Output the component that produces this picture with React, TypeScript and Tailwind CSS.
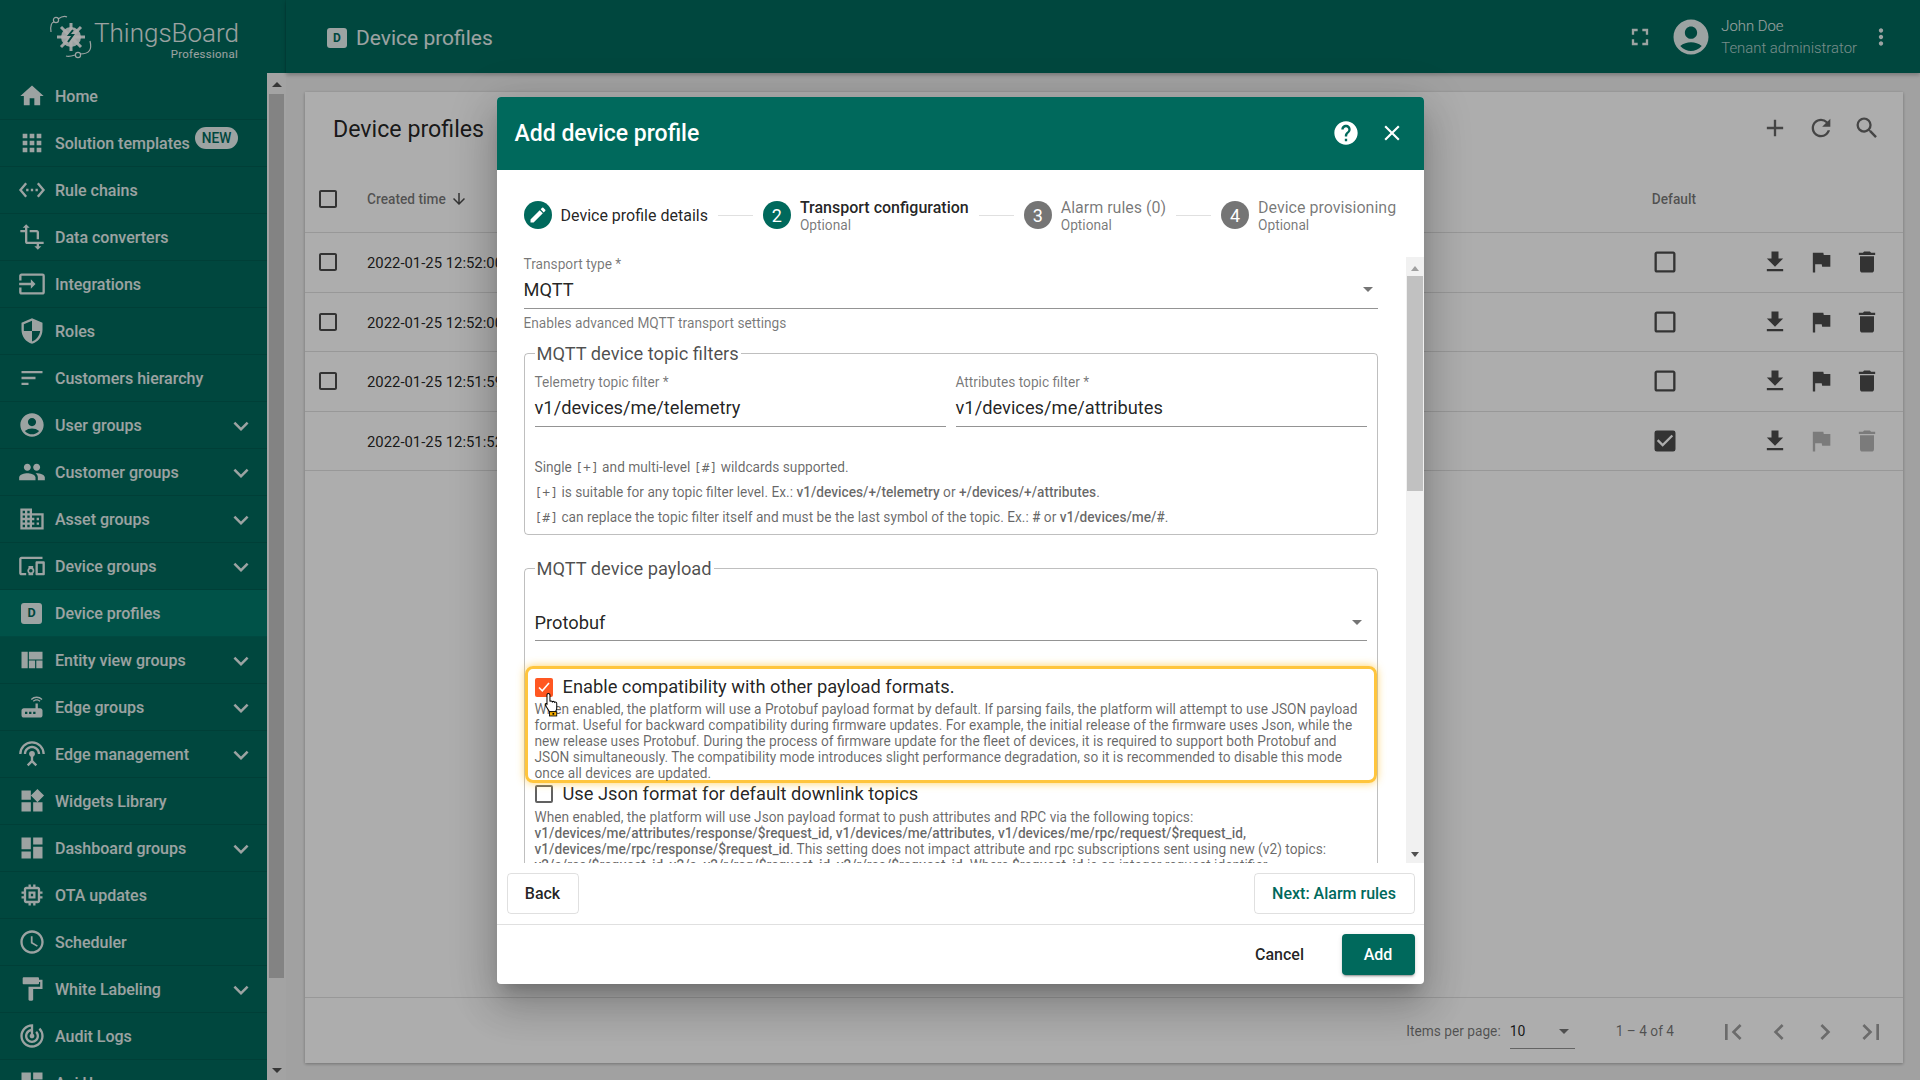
import type { ReactNode } from "react";
import {
  MdAccountCircle, MdAdd, MdApps, MdArrowDownward, MdCheckBox, MdCheckBoxOutlineBlank, MdChevronLeft, MdChevronRight,
  MdClose, MdDashboard, MdDelete, MdDevicesOther, MdDomain, MdEdit, MdExpandMore, MdFileDownload, MdFirstPage, MdFlag,
  MdFormatPaint, MdFullscreen, MdHelp, MdHome, MdInput, MdLastPage, MdMemory, MdMoreVert, MdPeople, MdRefresh, MdRouter,
  MdSchedule, MdSearch, MdSecurity, MdSettingsEthernet, MdSettingsInputAntenna, MdSort, MdTrackChanges, MdTransform,
  MdViewQuilt, MdWidgets,
} from "react-icons/md";

const DeviceIcon = ({ size }: { size: number }) => (
  <div
    className="flex items-center justify-center rounded-[3px] bg-white/90 text-[#00695c] font-bold leading-none"
    style={{ width: size, height: size, fontSize: size * 0.6 }}
  >
    D
  </div>
);

const menu: { label: string; icon: ReactNode; more?: boolean; active?: boolean; badge?: boolean }[] = [
  { label: "Home", icon: <MdHome size={28} /> },
  { label: "Solution templates", icon: <MdApps size={28} />, badge: true },
  { label: "Rule chains", icon: <MdSettingsEthernet size={28} /> },
  { label: "Data converters", icon: <MdTransform size={28} /> },
  { label: "Integrations", icon: <MdInput size={28} /> },
  { label: "Roles", icon: <MdSecurity size={28} /> },
  { label: "Customers hierarchy", icon: <MdSort size={28} /> },
  { label: "User groups", icon: <MdAccountCircle size={28} />, more: true },
  { label: "Customer groups", icon: <MdPeople size={28} />, more: true },
  { label: "Asset groups", icon: <MdDomain size={28} />, more: true },
  { label: "Device groups", icon: <MdDevicesOther size={28} />, more: true },
  { label: "Device profiles", icon: <span className="pl-[3px]"><DeviceIcon size={21} /></span>, active: true },
  { label: "Entity view groups", icon: <MdViewQuilt size={28} />, more: true },
  { label: "Edge groups", icon: <MdRouter size={28} />, more: true },
  { label: "Edge management", icon: <MdSettingsInputAntenna size={28} />, more: true },
  { label: "Widgets Library", icon: <MdWidgets size={28} /> },
  { label: "Dashboard groups", icon: <MdDashboard size={28} />, more: true },
  { label: "OTA updates", icon: <MdMemory size={28} /> },
  { label: "Scheduler", icon: <MdSchedule size={28} /> },
  { label: "White Labeling", icon: <MdFormatPaint size={28} />, more: true },
  { label: "Audit Logs", icon: <MdTrackChanges size={28} /> },
  { label: "Api Usage", icon: <MdDashboard size={28} /> },
];

const rows = [
  { time: "2022-01-25 12:52:00", isDefault: false },
  { time: "2022-01-25 12:52:00", isDefault: false },
  { time: "2022-01-25 12:51:59", isDefault: false },
  { time: "2022-01-25 12:51:52", isDefault: true },
];

const Logo = () => (
  <svg width="46" height="46" viewBox="0 0 46 46" className="text-white/90">
    {/* gear body */}
    <g fill="currentColor">
      <circle cx="23" cy="23" r="10" />
      <g stroke="currentColor" strokeWidth="3">
        <path d="M23 9v28M9 23h28M13 13l20 20M33 13L13 33" />
      </g>
    </g>
    <path d="M25 16l-4 5h4l-5 7" fill="none" stroke="#00695c" strokeWidth="2" />
    <g fill="none" stroke="currentColor" strokeWidth="1.2">
      <circle cx="8" cy="6" r="2.6" />
      <circle cx="30" cy="41" r="2.6" />
      <path d="M3 18C2 11 4 8 6 8M10 5c3-2 7-3 9-2M42 27c2 8 0 13-10 13M27 41c-3 1-6 2-9 1" />
    </g>
  </svg>
);

const Sidebar = () => (
  <div className="flex h-full w-[286px] shrink-0 flex-col bg-[#00695c]">
    <div className="flex h-[73px] shrink-0 items-center border-r border-black/5 pl-[48px]">
      <Logo />
      <div className="flex flex-col items-end pt-[4px]">
        <span className="text-[26px] leading-[30px] font-light text-white/90">ThingsBoard</span>
        <span className="mr-px text-[11.43px] leading-[12px] font-normal tracking-[0.3px] text-white/90">Professional</span>
      </div>
    </div>
    <div className="flex min-h-0 flex-1">
      <div className="w-[267px] overflow-hidden">
        {menu.map((m) => (
          <div
            key={m.label}
            className={`flex h-[47px] shrink-0 items-center border-b border-black/10 pl-[18px] text-[16px] font-medium text-white/90 ${m.active ? "bg-[#00796b]" : ""}`}
          >
            <span className="flex w-[37px] shrink-0 items-center justify-start">{m.icon}</span>
            <span className="whitespace-nowrap pt-[2px]">{m.label}</span>
            {m.badge && (
              <span className="-mt-[10px] ml-[5px] rounded-full bg-white/90 px-[7px] text-[13.71px] leading-[22px] text-[#00695c]">NEW</span>
            )}
            {m.more && <MdExpandMore size={30} className="ml-auto mr-[11px] mt-[2px]" />}
          </div>
        ))}
      </div>
      <Scrollbar />
    </div>
  </div>
);

// page scrollbar next to the menu
const Scrollbar = () => (
  <div className="flex w-[19px] shrink-0 flex-col items-center bg-[#f1f1f1] px-[2px]">
    <div className="mt-[9px] h-0 w-0 border-x-[5px] border-b-[5px] border-x-transparent border-b-[#505050]" />
    <div className="mt-[7px] h-[884px] w-full bg-[#c1c1c1]" />
    <div className="mt-auto mb-[7px] h-0 w-0 border-x-[5px] border-t-[5px] border-x-transparent border-t-[#505050]" />
  </div>
);

const Table = () => (
  <div className="flex h-full flex-col bg-white shadow-[0_1px_3px_rgba(0,0,0,0.3)]">
    <div className="flex h-[71px] shrink-0 items-center pl-[28px] pr-[22px] text-black/87">
      <span className="pt-[3px] text-[23.2px]">Device profiles</span>
      <div className="ml-auto flex items-center gap-[18px] text-black/60">
        <MdAdd size={28} />
        <MdRefresh size={28} />
        <MdSearch size={28} />
      </div>
    </div>
    <div className="flex h-[70px] shrink-0 items-center border-b border-black/12 pt-[2px] text-[13.71px] font-medium text-black/54">
      <div className="flex w-[62px] pl-[11px]"><MdCheckBoxOutlineBlank size={24} className="text-black/70" /></div>
      <span className="pt-[2px]">Created time</span>
      <MdArrowDownward size={18} className="ml-[4px] text-black/70" />
      <span className="ml-auto mr-[207px] pt-[2px]">Default</span>
    </div>
    {rows.map((r, i) => (
      <div key={i} className="flex h-[59.5px] shrink-0 items-center border-b border-black/12 text-[14.86px] text-black/87">
        <div className="flex w-[62px] pl-[11px]">{!r.isDefault && <MdCheckBoxOutlineBlank size={24} className="text-black/70" />}</div>
        <span className="pt-[2px]">{r.time}</span>
        <div className="ml-auto mr-[82px] text-black/70">
          {r.isDefault ? <MdCheckBox size={28} /> : <MdCheckBoxOutlineBlank size={28} />}
        </div>
        <div className="flex items-center gap-[18px] pr-[22px] text-black/70">
          <MdFileDownload size={28} />
          <MdFlag size={28} className={r.isDefault ? "opacity-40" : ""} />
          <MdDelete size={28} className={r.isDefault ? "opacity-40" : ""} />
        </div>
      </div>
    ))}
    <div className="flex-1" />
    <div className="flex h-[66px] shrink-0 items-center border-t border-black/12 pt-[2px] text-[13.71px] text-black/54">
      <span className="ml-auto">Items per page:</span>
      <div className="ml-[9px] flex h-[34px] w-[65px] items-center justify-between border-b border-black/42 pr-[6px] text-[14px] text-black/87">
        <span>10</span>
        <div className="h-0 w-0 border-x-[5px] border-t-[5px] border-x-transparent border-t-black/54" />
      </div>
      <span className="ml-[41px]">1 – 4 of 4</span>
      <div className="ml-[43px] flex items-center gap-[14px] pr-[16px] text-black/38">
        <MdFirstPage size={32} />
        <MdChevronLeft size={32} />
        <MdChevronRight size={32} />
        <MdLastPage size={32} />
      </div>
    </div>
  </div>
);

const Step = ({ n, title, active, done }: { n: string; title: string; active?: boolean; done?: boolean }) => (
  <div className="flex shrink-0 items-center">
    <div
      className={`flex h-[28px] w-[28px] items-center justify-center rounded-full text-[18px] text-white ${active || done ? "bg-[#00695c]" : "bg-black/54"}`}
    >
      {done ? <MdEdit size={20} /> : n}
    </div>
    <div className={`ml-[9px] flex flex-col ${done ? "" : "mt-[2px]"}`}>
      <span className={`text-[16px] leading-[19px] whitespace-nowrap ${done ? "text-black/87" : active ? "font-medium text-black/87" : "text-black/54"}`}>{title}</span>
      {!done && <span className="text-[13.71px] leading-[17px] text-black/54">Optional</span>}
    </div>
  </div>
);

const StepLine = () => <div className="mx-[10px] h-px w-[35px] shrink-0 bg-black/12" />;

const Check = ({ checked }: { checked?: boolean }) =>
  checked ? (
    <div className="flex h-[19px] w-[18px] shrink-0 items-center justify-center rounded-[2px] bg-[#ff5722] text-white">
      <svg width="14" height="14" viewBox="0 0 14 14"><path d="M2 7.500l3.300 3.300L12 3" fill="none" stroke="currentColor" strokeWidth="1.6" /></svg>
    </div>
  ) : (
    <div className="h-[18px] w-[18px] shrink-0 rounded-[2px] border-2 border-[#616161]" />
  );

const Field = ({ label, value, className }: { label: string; value: string; className?: string }) => (
  <div className={className}>
    <div className="text-[13.71px] leading-[12px] text-black/54 whitespace-nowrap">{label}</div>
    <div className="mt-[10px] border-b border-black/42 pb-[8px] text-[18.29px] leading-[20px] text-black/87">{value}</div>
  </div>
);

const Mono = ({ children }: { children: string }) => <span className="font-['DejaVu_Sans_Mono'] text-[13px] leading-none">{children}</span>;

// pointer drawn on top of the first checkbox
const HandCursor = () => (
  <svg width="17" height="25" viewBox="0 0 20 29" className="absolute left-[16px] top-[23px]">
    <path
      d="M5 1.500c1.200 0 2 .8 2 2V11c.5-1 2.500-.8 2.800.4.700-1 2.500-.6 2.800.6.800-.8 2.400-.4 2.400 1.200V19c0 1.500-.7 2.600-1.500 4H6.500L2 16c-.8-1.200-.5-2.400.5-2.600.8-.2 1.500.3 1 .9V3.500c0-1.200.3-2 1.500-2z"
      fill="#fff"
      stroke="#000"
      strokeWidth="1.2"
    />
    <rect x="6.500" y="23" width="8.500" height="5" fill="#ffb300" stroke="#000" strokeWidth="1" />
    <rect x="10" y="24.500" width="2" height="2" fill="#000" />
  </svg>
);

const Dialog = () => (
  <div className="flex h-[887px] w-[927px] flex-col overflow-hidden rounded-[4px] bg-white shadow-[0_11px_15px_-7px_rgba(0,0,0,0.2),0_24px_38px_3px_rgba(0,0,0,0.14),0_9px_46px_8px_rgba(0,0,0,0.12)]">
    <div className="flex h-[73px] shrink-0 items-center bg-[#00695c] pl-[18px] pr-[19px] text-white">
      <span className="pt-[2px] text-[23px] font-medium">Add device profile</span>
      <MdHelp size={28} className="ml-auto" />
      <MdClose size={26} className="ml-[19px]" />
    </div>

    <div className="flex h-[87px] shrink-0 items-center pl-[27px] pt-[4px]">
      <Step n="1" title="Device profile details" done />
      <StepLine />
      <Step n="2" title="Transport configuration" active />
      <StepLine />
      <Step n="3" title="Alarm rules (0)" />
      <StepLine />
      <Step n="4" title="Device provisioning" />
    </div>

    <div className="flex h-[606px] shrink-0">
      <div className="min-w-0 flex-1 overflow-hidden pl-[27px] pr-[28px]">
        <div className="pt-px text-[13.71px] leading-[12px] text-black/54">Transport type *</div>
        <div className="mt-[10px] flex items-center justify-between border-b border-black/42 pb-[8px] text-[18.29px] leading-[20px] text-black/87">
          MQTT
          <div className="mr-[5px] h-0 w-0 border-x-[5px] border-t-[5px] border-x-transparent border-t-black/54" />
        </div>
        <div className="mt-[8px] text-[13.71px] leading-[12px] text-black/54">Enables advanced MQTT transport settings</div>

        <fieldset className="mt-[14px] rounded-[4px] border border-black/25 px-[10px] pb-[4px]">
          <legend className="px-[2px] text-[18.29px] leading-[22px] text-black/70">MQTT device topic filters</legend>
          <div className="mt-[11px] flex gap-[10px]">
            <Field className="flex-1" label="Telemetry topic filter *" value="v1/devices/me/telemetry" />
            <Field className="flex-1" label="Attributes topic filter *" value="v1/devices/me/attributes" />
          </div>
          <div className="mt-[28px] text-[13.71px] leading-[25px] whitespace-nowrap text-black/60">
            <div>Single <Mono>[+]</Mono> and multi-level <Mono>[#]</Mono> wildcards supported.</div>
            <div><Mono>[+]</Mono> is suitable for any topic filter level. Ex.: <b className="font-medium">v1/devices/+/telemetry</b> or <b className="font-medium">+/devices/+/attributes</b>.</div>
            <div><Mono>[#]</Mono> can replace the topic filter itself and must be the last symbol of the topic. Ex.: <b className="font-medium">#</b> or <b className="font-medium">v1/devices/me/#</b>.</div>
          </div>
        </fieldset>

        <fieldset className="mt-[23px] rounded-[4px] border border-black/25 px-[10px]">
          <legend className="px-[2px] text-[18.29px] leading-[22px] text-black/70">MQTT device payload</legend>
          <div className="mt-[33px] flex items-center justify-between border-b border-black/42 pb-[7px] text-[18.29px] leading-[20px] text-black/87">
            Protobuf
            <div className="mr-[5px] h-0 w-0 border-x-[5px] border-t-[5px] border-x-transparent border-t-black/54" />
          </div>

          <div className="relative -mx-[10px] mt-[25px] h-[117px] rounded-[8px] border-[3px] border-[#ffc53d] pl-[7px] pt-[9px] shadow-[0_0_8px_rgba(255,197,61,0.8)]">
            <div className="flex h-[19px] items-center gap-[10px]">
              <Check checked />
              <span className="text-[18.29px] leading-[20px] whitespace-nowrap text-black/87">Enable compatibility with other payload formats.</span>
            </div>
            <div className="mt-[4px] text-[13.71px] leading-[16px] whitespace-nowrap text-black/60">
              When enabled, the platform will use a Protobuf payload format by default. If parsing fails, the platform will attempt to use JSON payload<br />
              format. Useful for backward compatibility during firmware updates. For example, the initial release of the firmware uses Json, while the<br />
              new release uses Protobuf. During the process of firmware update for the fleet of devices, it is required to support both Protobuf and<br />
              JSON simultaneously. The compatibility mode introduces slight performance degradation, so it is recommended to disable this mode<br />
              once all devices are updated.
            </div>
            <HandCursor />
          </div>

          <div className="flex h-[22px] items-center gap-[10px]">
            <Check />
            <span className="text-[18.29px] leading-[20px] whitespace-nowrap text-black/87">Use Json format for default downlink topics</span>
          </div>
          <div className="mt-[4px] text-[13.71px] leading-[16px] whitespace-nowrap text-black/60">
            When enabled, the platform will use Json payload format to push attributes and RPC via the following topics:<br />
            <b className="font-medium">v1/devices/me/attributes/response/$request_id, v1/devices/me/attributes, v1/devices/me/rpc/request/$request_id,</b><br />
            <b className="font-medium">v1/devices/me/rpc/response/$request_id</b>. This setting does not impact attribute and rpc subscriptions sent using new (v2) topics:<br />
            <b className="font-medium">v2/a/res/$request_id, v2/a, v2/r/req/$request_id, v2/r/res/$request_id</b>. Where <b className="font-medium">$request_id</b> is an integer request identifier.
          </div>
        </fieldset>
      </div>
      <div className="flex w-[18px] shrink-0 flex-col items-center bg-[#f1f1f1] px-[1px]">
        <div className="mt-[9px] h-0 w-0 border-x-[4px] border-b-[5px] border-x-transparent border-b-[#a0a0a0]" />
        <div className="mt-[5px] h-[215px] w-full bg-[#c1c1c1]" />
        <div className="mt-auto mb-[6px] h-0 w-0 border-x-[4px] border-t-[5px] border-x-transparent border-t-[#505050]" />
      </div>
    </div>

    <div className="flex h-[62px] shrink-0 items-center justify-between border-b border-black/12 pl-[10px] pr-[9px] text-[16px] font-medium">
      <button className="h-[41px] w-[72px] rounded-[4px] border border-black/12 pt-[2px] text-black/87">Back</button>
      <button className="h-[41px] w-[161px] rounded-[4px] border border-black/12 pt-[2px] text-[#00695c]">Next: Alarm rules</button>
    </div>
    <div className="flex min-h-0 flex-1 items-center justify-end gap-[22px] pr-[9px] text-[16px] font-medium">
      <button className="w-[80px] pt-[2px] text-black/87">Cancel</button>
      <button className="h-[41px] w-[73px] rounded-[4px] bg-[#00695c] pt-[2px] text-white shadow-[0_3px_1px_-2px_rgba(0,0,0,0.2),0_2px_2px_0_rgba(0,0,0,0.14),0_1px_5px_0_rgba(0,0,0,0.12)]">Add</button>
    </div>
  </div>
);

export default function App() {
  return (
    <div className="relative flex h-[1080px] w-[1920px] overflow-hidden bg-[#eeeeee] font-['Roboto',sans-serif]">
      <Sidebar />
      <div className="flex min-w-0 flex-1 flex-col">
        <div className="flex h-[73px] shrink-0 items-center bg-[#00695c] pl-[41px] pr-[26px] text-white shadow-[0_2px_4px_rgba(0,0,0,0.25)]">
          <span className="mt-[2px]"><DeviceIcon size={20} /></span>
          <span className="ml-[9px] pt-[5px] text-[21px] text-white/90">Device profiles</span>
          <MdFullscreen size={28} className="ml-auto text-white/90" />
          <MdAccountCircle size={42} className="ml-[16px] text-white/90" />
          <div className="ml-[9px] flex flex-col text-[14.86px] leading-[22px]">
            <span className="font-light text-white/90">John Doe</span>
            <span className="font-light text-white/70">Tenant administrator</span>
          </div>
          <MdMoreVert size={26} className="ml-[11px] text-white/90" />
        </div>
        <div className="min-h-0 flex-1 pb-[17px] pl-[19px] pr-[17px] pt-[19px]">
          <Table />
        </div>
      </div>
      <div className="absolute inset-0 z-20 flex items-center justify-center bg-black/32">
        <Dialog />
      </div>
    </div>
  );
}
